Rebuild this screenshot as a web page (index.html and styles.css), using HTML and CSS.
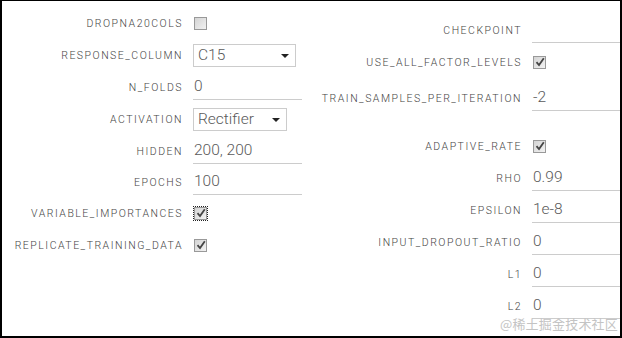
FILE: index.html
```html
<!DOCTYPE html>
<html lang="en">
  <head>
    <meta charset="UTF-8" />
    <meta name="viewport" content="width=device-width, initial-scale=1.0" />
    <title>Model Parameters</title>
    <link rel="stylesheet" href="styles.css">
  </head>
  <body>
    <div class="frame">
      <div class="column left-col">
        <div class="row">
          <label>DROPNA20COLS</label>
          <span class="check"></span>
        </div>
        <div class="row">
          <label>RESPONSE_COLUMN</label>
          <div class="select wide">C15<span class="caret"></span></div>
        </div>
        <div class="row">
          <label>N_FOLDS</label>
          <div class="text">0</div>
        </div>
        <div class="row">
          <label>ACTIVATION</label>
          <div class="select">Rectifier<span class="caret"></span></div>
        </div>
        <div class="row">
          <label>HIDDEN</label>
          <div class="text">200, 200</div>
        </div>
        <div class="row short">
          <label>EPOCHS</label>
          <div class="text">100</div>
        </div>
        <div class="row">
          <label>VARIABLE_IMPORTANCES</label>
          <span class="check checked focused">
            <svg viewBox="0 0 12 12" width="12" height="12"><path d="M2.5 6.2 L5 9 L9.8 2.2" fill="none" stroke="#444" stroke-width="1.8"/></svg>
          </span>
        </div>
        <div class="row">
          <label>REPLICATE_TRAINING_DATA</label>
          <span class="check checked">
            <svg viewBox="0 0 12 12" width="12" height="12"><path d="M2.5 6.2 L5 9 L9.8 2.2" fill="none" stroke="#444" stroke-width="1.8"/></svg>
          </span>
        </div>
      </div>

      <div class="column right-col">
        <div class="row">
          <label>CHECKPOINT</label>
          <div class="text"></div>
        </div>
        <div class="row">
          <label>USE_ALL_FACTOR_LEVELS</label>
          <span class="check checked">
            <svg viewBox="0 0 12 12" width="12" height="12"><path d="M2.5 6.2 L5 9 L9.8 2.2" fill="none" stroke="#444" stroke-width="1.8"/></svg>
          </span>
        </div>
        <div class="row tall">
          <label>TRAIN_SAMPLES_PER_ITERATION</label>
          <div class="text">-2</div>
        </div>
        <div class="row">
          <label>ADAPTIVE_RATE</label>
          <span class="check checked">
            <svg viewBox="0 0 12 12" width="12" height="12"><path d="M2.5 6.2 L5 9 L9.8 2.2" fill="none" stroke="#444" stroke-width="1.8"/></svg>
          </span>
        </div>
        <div class="row">
          <label>RHO</label>
          <div class="text">0.99</div>
        </div>
        <div class="row">
          <label>EPSILON</label>
          <div class="text">1e-8</div>
        </div>
        <div class="row">
          <label>INPUT_DROPOUT_RATIO</label>
          <div class="text">0</div>
        </div>
        <div class="row">
          <label>L1</label>
          <div class="text">0</div>
        </div>
        <div class="row">
          <label>L2</label>
          <div class="text">0</div>
        </div>
      </div>

      <div class="watermark">@稀土掘金技术社区</div>
    </div>
  </body>
</html>
```

FILE: styles.css
```css
body {
  margin: 0;
  background-color: #fff;
  font-family: Roboto, "Liberation Sans", sans-serif;
}

.frame {
  position: relative;
  width: 622px;
  height: 338px;
  box-sizing: border-box;
  border-style: solid;
  border-color: #000;
  border-width: 1px 2px 2px 2px;
  display: flex;
  overflow: hidden;
}

.column {
  display: flex;
  flex-direction: column;
}

.left-col {
  width: 308px;
  padding-top: 6px;
}

.right-col {
  flex: 1;
  padding-top: 13px;
}

.row {
  display: grid;
  align-items: center;
  height: 32px;
  column-gap: 11px;
}

.left-col .row {
  grid-template-columns: 180px 109px;
}

.right-col .row {
  grid-template-columns: 211px 1fr;
}

.row.short {
  height: 30px;
}

.row.tall {
  height: 40px;
  margin-bottom: 12px;
}

label {
  text-align: right;
  font-size: 10.5px;
  font-weight: 300;
  letter-spacing: 1.5px;
  color: #444;
  white-space: nowrap;
  margin-right: -1px;
}

.text {
  height: 25px;
  line-height: 25px;
  border-bottom: 1px solid #ccc;
  font-size: 15.5px;
  font-weight: 300;
  color: #5a5a5a;
  padding-left: 1px;
  white-space: nowrap;
}

.select {
  position: relative;
  width: 97px;
  height: 21px;
  line-height: 21px;
  border: 1px solid #ccc;
  font-size: 15.5px;
  font-weight: 300;
  color: #5a5a5a;
  padding-left: 4px;
}

.select {
  width: 88px;
}

.select.wide {
  width: 97px;
}

.caret {
  position: absolute;
  right: 6px;
  top: 9px;
  border-left: 4px solid transparent;
  border-right: 4px solid transparent;
  border-top: 4px solid #222;
}

.check {
  display: block;
  width: 11px;
  height: 11px;
  margin-left: 1px;
  border: 1px solid #999;
  background: linear-gradient(135deg, #d4d4d4, #f2f2f2);
}

.check svg {
  display: block;
  margin: -1px 0 0 0;
}

.check.focused {
  outline: 1px dotted #222;
  outline-offset: 0;
}

.watermark {
  position: absolute;
  right: 2px;
  bottom: 3px;
  font-family: "Noto Sans CJK SC", sans-serif;
  font-size: 13px;
  color: #c4c4c4;
  letter-spacing: 0.2px;
}
```
